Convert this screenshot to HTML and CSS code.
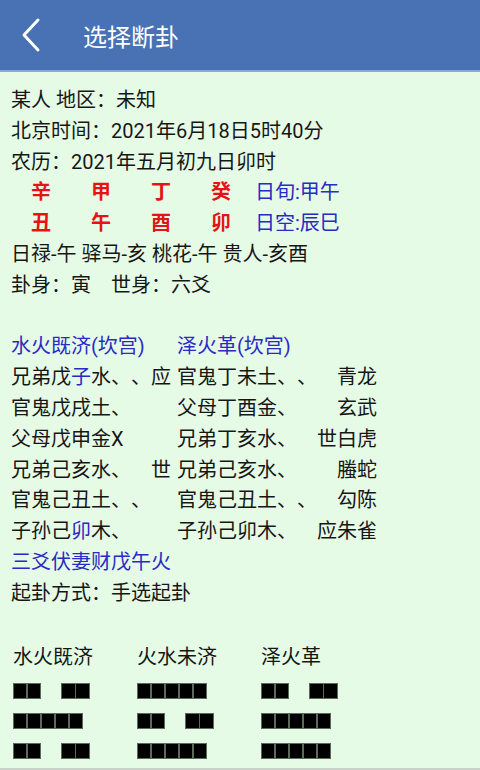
FILE: index.html
```html
<!DOCTYPE html>
<html lang="zh">
<head>
<meta charset="utf-8">
<title>选择断卦</title>
<link rel="stylesheet" href="styles.css">
</head>
<body>
<header class="topbar">
  <svg class="back" width="24" height="36" viewBox="0 0 24 36" aria-hidden="true">
    <polyline points="17,3 3,18 17,33" fill="none" stroke="#ffffff" stroke-width="3" stroke-linecap="round" stroke-linejoin="round"/>
  </svg>
  <h1 class="title">选择断卦</h1>
</header>
<main class="content">
  <div class="line">某人 地区：未知</div>
  <div class="line">北京时间：2021年6月18日5时40分</div>
  <div class="line">农历：2021年五月初九日卯时</div>
  <div class="line ganzhi"><span class="gz">辛</span><span class="gz">甲</span><span class="gz">丁</span><span class="gz">癸</span><span class="info">日旬:甲午</span></div>
  <div class="line ganzhi"><span class="gz">丑</span><span class="gz">午</span><span class="gz">酉</span><span class="gz">卯</span><span class="info">日空:辰巳</span></div>
  <div class="line">日禄-午 驿马-亥 桃花-午 贵人-亥酉</div>
  <div class="line">卦身：寅　世身：六爻</div>
  <div class="line"></div>
  <div class="line row"><span class="c1 blue">水火既济(坎宫)</span><span class="c2 blue">泽火革(坎宫)</span></div>
  <div class="line row"><span class="c1"><span>兄弟戊<span class="blue">子</span>水、、</span><span>应</span></span><span class="c2"><span>官鬼丁未土、、</span><span>青龙</span></span></div>
  <div class="line row"><span class="c1"><span>官鬼戊戌土、</span><span></span></span><span class="c2"><span>父母丁酉金、</span><span>玄武</span></span></div>
  <div class="line row"><span class="c1"><span>父母戊申金X</span><span></span></span><span class="c2"><span>兄弟丁亥水、</span><span>世白虎</span></span></div>
  <div class="line row"><span class="c1"><span>兄弟己亥水、</span><span>世</span></span><span class="c2"><span>兄弟己亥水、</span><span>螣蛇</span></span></div>
  <div class="line row"><span class="c1"><span>官鬼己丑土、、</span><span></span></span><span class="c2"><span>官鬼己丑土、、</span><span>勾陈</span></span></div>
  <div class="line row"><span class="c1"><span>子孙己<span class="blue">卯</span>木、</span><span></span></span><span class="c2"><span>子孙己卯木、</span><span>应朱雀</span></span></div>
  <div class="line blue">三爻伏妻财戊午火</div>
  <div class="line">起卦方式：手选起卦</div>

  <section class="guas">
    <div class="gua">
      <div class="gua-name">水火既济</div>
      <div class="yao yin"><i></i><i></i><b></b><i></i><i></i></div>
      <div class="yao"><i></i><i></i><i></i><i></i><i></i></div>
      <div class="yao yin"><i></i><i></i><b></b><i></i><i></i></div>
    </div>
    <div class="gua">
      <div class="gua-name">火水未济</div>
      <div class="yao"><i></i><i></i><i></i><i></i><i></i></div>
      <div class="yao yin"><i></i><i></i><b></b><i></i><i></i></div>
      <div class="yao"><i></i><i></i><i></i><i></i><i></i></div>
    </div>
    <div class="gua">
      <div class="gua-name">泽火革</div>
      <div class="yao yin"><i></i><i></i><b></b><i></i><i></i></div>
      <div class="yao"><i></i><i></i><i></i><i></i><i></i></div>
      <div class="yao"><i></i><i></i><i></i><i></i><i></i></div>
    </div>
  </section>
  <div class="divider"></div>
</main>
</body>
</html>
```
FILE: styles.css
```css
* { box-sizing: border-box; }
html, body {
  margin: 0;
  padding: 0;
}
body {
  width: 480px;
  height: 770px;
  overflow: hidden;
  background: #e6fbe6;
  font-family: "Roboto", "Noto Sans CJK SC", sans-serif;
  color: #161616;
  text-spacing-trim: space-all;
}
.topbar {
  height: 72px;
  background: #4872b4;
  border-bottom: 2px solid #8ea8d4;
  display: flex;
  align-items: center;
  padding-left: 21px;
}
.back {
  display: block;
  flex: none;
}
.title {
  margin: 0 0 0 38px;
  font-size: 24px;
  font-weight: normal;
  color: #ffffff;
  letter-spacing: 0;
}
.content {
  padding: 13px 0 0 11px;
}
.line {
  height: 30.8px;
  line-height: 30.8px;
  font-size: 20px;
  white-space: pre;
}
.blue { color: #2a2ac4; }
.ganzhi {
  display: flex;
  padding-left: 20px;
}
.gz {
  width: 60px;
  color: #e41414;
  font-weight: bold;
}
.gz:nth-child(4) { width: 44px; }
.info { color: #2a2ac4; }
.row {
  display: flex;
  gap: 6px;
}
.c1, .c2 {
  display: flex;
  justify-content: space-between;
}
.c1 { width: 160px; }
.c2 { width: 200px; }
.guas {
  display: flex;
  padding: 35px 0 0 2px;
}
.gua {
  width: 124px;
}
.gua-name {
  font-size: 20px;
  height: 26px;
  line-height: 26px;
  margin-bottom: 13px;
}
.yao {
  display: flex;
  height: 16px;
  margin-bottom: 14px;
}
.yao:last-child { margin-bottom: 0; }
.yao i {
  display: block;
  width: 14.3px;
  height: 16px;
  background: #000;
  border: 1px solid #5c6a5c;
  margin-right: -0.3px;
}
.yao b {
  display: block;
  width: 20.4px;
}
.divider {
  margin: 9px 0 0 -11px;
  height: 2px;
  background: #c9d2c9;
}
```
